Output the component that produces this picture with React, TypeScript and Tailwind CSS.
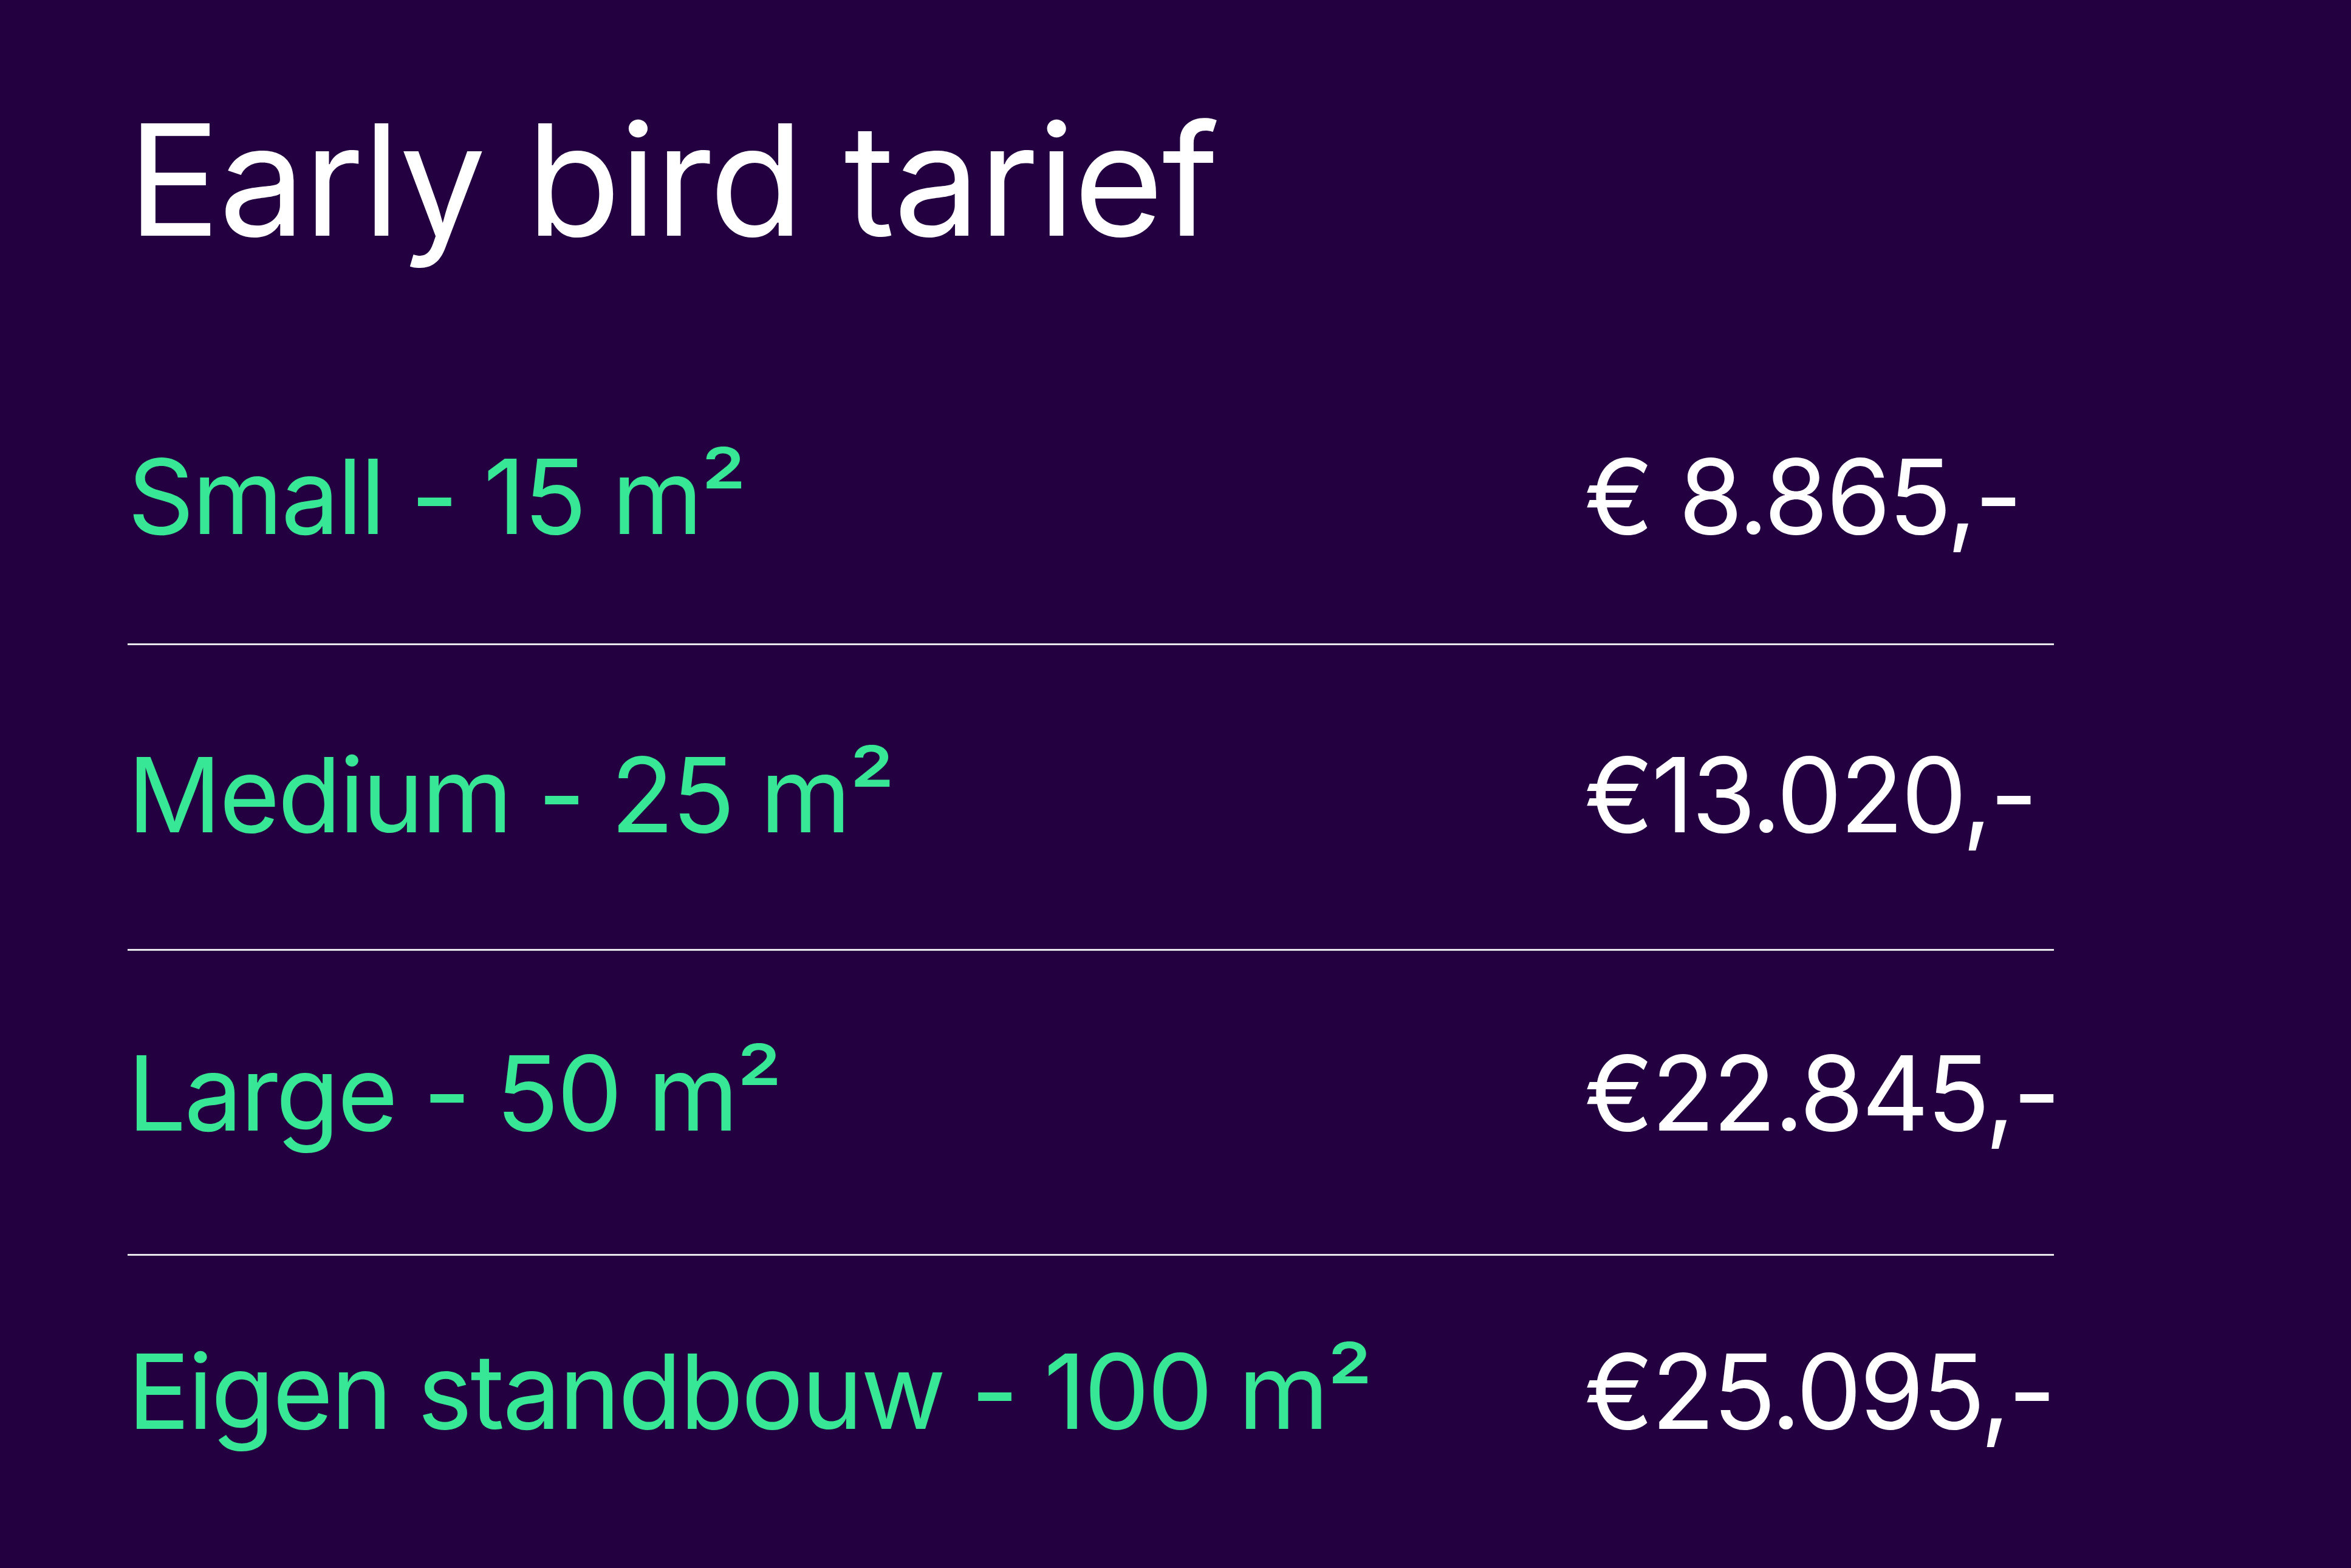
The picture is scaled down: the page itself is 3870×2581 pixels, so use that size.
import React from 'react'

type Tier = {
  label: string
  price: string
  rowClass: string
}

// margins are tuned per row so the baselines land where the artwork has them
const tiers: Tier[] = [
  { label: 'Small - 15 m²', price: '€ 8.865,-', rowClass: 'mt-[308px] mb-[157px]' },
  { label: 'Medium - 25 m²', price: '€13.020,-', rowClass: 'mt-[160px] mb-[169px]' },
  { label: 'Large - 50 m²', price: '€22.845,-', rowClass: 'mt-[148px] mb-[180px]' },
  { label: 'Eigen standbouw - 100 m²', price: '€25.095,-', rowClass: 'mt-[137px]' },
]

export default function App() {
  return (
    <div
      className="w-[3870px] h-[2581px] bg-[#230040] pl-[210px] pt-[169px] overflow-hidden"
      style={{ fontFamily: 'Inter, "Noto Sans", sans-serif' }}
    >
      <div className="w-[3171px] flex flex-col">
        <h1 className="text-[254px] leading-none font-normal text-white tracking-[-0.01em]">
          Early bird tarief
        </h1>

        {tiers.map((t, i) => (
          <div key={t.label} className="flex flex-col">
            <div className={`flex items-baseline text-[171px] leading-none ${t.rowClass}`}>
              <span className="flex-1 text-[#37e796] tracking-[-0.02em]">{t.label}</span>
              <span className="w-[773px] text-white tracking-[-0.02em]">{t.price}</span>
            </div>
            {i < tiers.length - 1 && <div className="h-[3px] bg-white/90" />}
          </div>
        ))}
      </div>
    </div>
  )
}
